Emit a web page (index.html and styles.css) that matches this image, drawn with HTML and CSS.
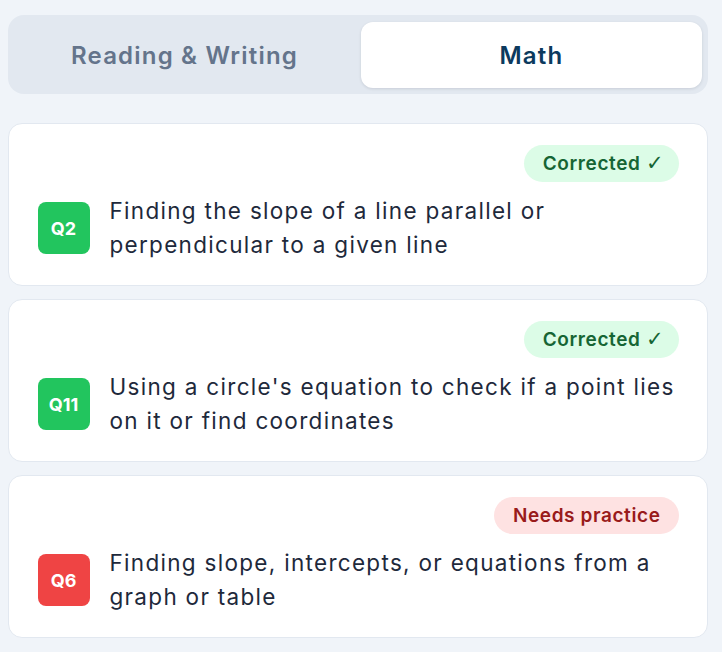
FILE: index.html
```html
<!DOCTYPE html>
<html lang="en">
<head>
<meta charset="utf-8">
<title>Questions</title>
<link rel="stylesheet" href="styles.css">
</head>
<body>
<div class="wrap">
  <div class="tabs">
    <div class="tab">Reading &amp; Writing</div>
    <div class="tab active">Math</div>
  </div>
  <div class="list">
    <div class="card">
      <div class="status"><span class="pill ok">Corrected <span class="check">✓</span></span></div>
      <div class="row">
        <div class="qnum green">Q2</div>
        <div class="topic">Finding the slope of a line parallel or perpendicular to a given line</div>
      </div>
    </div>
    <div class="card">
      <div class="status"><span class="pill ok">Corrected <span class="check">✓</span></span></div>
      <div class="row">
        <div class="qnum green">Q11</div>
        <div class="topic">Using a circle's equation to check if a point lies on it or find coordinates</div>
      </div>
    </div>
    <div class="card">
      <div class="status"><span class="pill bad">Needs practice</span></div>
      <div class="row">
        <div class="qnum red">Q6</div>
        <div class="topic">Finding slope, intercepts, or equations from a graph or table</div>
      </div>
    </div>
  </div>
</div>
</body>
</html>
```

FILE: styles.css
```css
* { box-sizing: border-box; }
html, body { margin: 0; padding: 0; }
body {
  background: #f0f4f9;
  font-family: Inter, "Noto Sans", sans-serif;
  color: #1e293b;
}
.wrap {
  width: 700px;
  margin-left: 8px;
  padding-top: 15px;
}
.tabs {
  display: grid;
  grid-template-columns: 1fr 1fr;
  gap: 6px;
  padding: 7px 6px 6px 6px;
  background: #e2e8f0;
  border-radius: 16px;
  height: 79px;
}
.tab {
  display: flex;
  align-items: center;
  justify-content: center;
  border-radius: 12px;
  font-size: 24px;
  font-weight: 600;
  color: #64748b;
  letter-spacing: 1.2px;
}
.tab.active {
  background: #ffffff;
  color: #0c3a5e;
  box-shadow: 0 1px 3px rgba(15, 23, 42, 0.12);
}
.list {
  margin-top: 29px;
  display: flex;
  flex-direction: column;
  gap: 13px;
}
.card {
  background: #ffffff;
  border: 1.5px solid #e2e8f0;
  border-radius: 14px;
  padding: 20.5px 28.5px 20px 28.5px;
  height: 163px;
}
.status {
  display: flex;
  justify-content: flex-end;
}
.pill {
  display: inline-flex;
  align-items: center;
  height: 37px;
  padding: 0 15px 0 19px;
  border-radius: 19px;
  font-size: 19px;
  font-weight: 600;
  letter-spacing: 0.6px;
  white-space: pre;
}
.pill.bad { padding: 0 18px 0 19px; }
.check {
  font-family: "DejaVu Sans", sans-serif;
  font-weight: 700;
  font-size: 21px;
  letter-spacing: 0;
}
.pill.ok { background: #dcfce7; color: #166534; }
.pill.bad { background: #fee2e2; color: #991b1b; }
.row {
  display: flex;
  align-items: center;
  gap: 20px;
  margin-top: 12px;
}
.qnum {
  flex: 0 0 52px;
  width: 52px;
  height: 52px;
  border-radius: 8px;
  display: flex;
  align-items: center;
  justify-content: center;
  color: #ffffff;
  font-size: 18px;
  font-weight: 700;
}
.qnum.green { background: #22c55e; }
.qnum.red { background: #ef4444; }
.topic {
  font-size: 22.5px;
  line-height: 34.5px;
  letter-spacing: 1.3px;
  color: #1e293b;
}
```
